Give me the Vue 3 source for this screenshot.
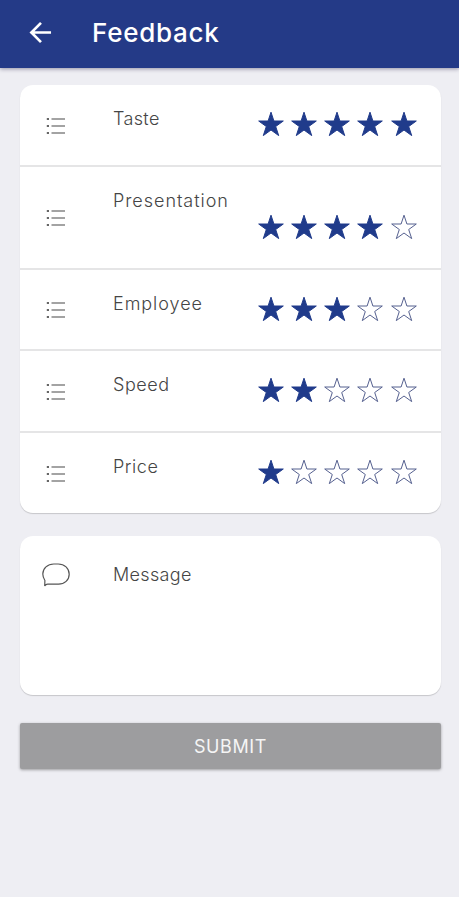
<template>
  <div class="feedback-page">
    <header class="toolbar">
      <button class="back-button" aria-label="Back">
        <svg class="back-icon" viewBox="0 0 24 24">
          <path d="M23 12H3M12.5 2L2.5 12L12.5 22" />
        </svg>
      </button>
      <h1 class="toolbar-title">Feedback</h1>
    </header>

    <main class="content">
      <!-- Rating rows -->
      <section class="card">
        <div
          v-for="item in items"
          :key="item.name"
          class="rating-row"
          :class="{ wrapped: item.wrapped }"
        >
          <svg class="list-icon" viewBox="0 0 20 18">
            <path class="list-lines" d="M5.5 2H19M5.5 9H19M5.5 16H19" />
            <path class="list-dots" d="M.8 2H3M.8 9H3M.8 16H3" />
          </svg>
          <div class="rating-body">
            <span class="label" :class="item.name.toLowerCase()">{{ item.name }}</span>
            <div class="stars">
              <svg
                v-for="n in 5"
                :key="n"
                class="star"
                :class="{ filled: n <= item.rating }"
                viewBox="0 0 28 26"
                @click="item.rating = n"
              >
                <path d="M14 1.2L16.9 10H26.3L18.7 15.5L21.7 24.6L14 19L6.3 24.6L9.3 15.5L1.7 10H11.1Z" />
              </svg>
            </div>
          </div>
        </div>
      </section>

      <!-- Message -->
      <section class="card message-card">
        <svg class="chat-icon" viewBox="0 0 28 24">
          <path d="M2.7 23L2.9 17.5C1.5 15.3.8 13.3.8 11C.8 5.3 5.6 1 11.8 1H16.2C22.5 1 27.2 5.4 27.2 11.2C27.2 17 22.5 21.2 16.5 21.2H5.6C4.4 21.2 3.4 21.8 2.7 23Z" />
        </svg>
        <span class="label message">Message</span>
      </section>

      <button class="submit-button">SUBMIT</button>
    </main>
  </div>
</template>

<script setup>
import { reactive } from 'vue'

const items = reactive([
  { name: 'Taste', rating: 5 },
  { name: 'Presentation', rating: 4, wrapped: true },
  { name: 'Employee', rating: 3 },
  { name: 'Speed', rating: 2 },
  { name: 'Price', rating: 1 }
])
</script>

<style>
body {
  margin: 0;
  background: #fff;
}
</style>

<style scoped>
.feedback-page {
  height: 896.5px;
  background: #eeeef3;
  font-family: Inter, "Liberation Sans", sans-serif;
}

/* Toolbar */
.toolbar {
  display: flex;
  align-items: center;
  box-sizing: border-box;
  height: 68px;
  padding: 0 0 3px 28px;
  background: #243a87;
  box-shadow: 0 1px 4px rgba(40, 35, 70, 0.45);
}
.back-button {
  display: flex;
  padding: 0;
  border: none;
  background: none;
  cursor: pointer;
}
.back-icon {
  width: 25px;
  height: 23px;
  fill: none;
  stroke: #fff;
  stroke-width: 2.8;
}
.toolbar-title {
  margin: 0 0 0 39px;
  color: #fff;
  font-size: 26px;
  font-weight: 500;
  line-height: 32px;
  letter-spacing: 0.75px;
}

.content {
  padding: 17px 18px 0 20px;
}

/* Cards */
.card {
  background: #fff;
  border-radius: 13px;
  box-shadow: 0 1px 1px rgba(0, 0, 0, 0.17);
}
.rating-row {
  display: flex;
  align-items: center;
  box-sizing: border-box;
  height: 81.6px;
  padding-left: 26px;
  border-bottom: 2px solid #e5e5e6;
}
.rating-row.wrapped {
  height: 103px;
}
.rating-row:last-child {
  height: 80px;
  border-bottom: none;
}
.list-icon {
  width: 20px;
  height: 18px;
  flex: none;
  margin-top: 2px;
  fill: none;
  stroke: #858585;
}
.list-lines {
  stroke-width: 1.4;
}
.list-dots {
  stroke: #666;
  stroke-width: 2;
}
.rating-body {
  display: flex;
  flex: 1;
  align-self: flex-start;
  justify-content: space-between;
  align-items: flex-start;
  padding: 22px 23.4px 0 47px;
}
.wrapped .rating-body {
  flex-direction: column;
}
.label {
  color: #454545;
  font-size: 18px;
  font-weight: 300;
  line-height: 24px;
  letter-spacing: 0.55px;
}
.label.taste,
.label.message {
  letter-spacing: 0.35px;
}
.label.presentation,
.label.employee {
  letter-spacing: 0.95px;
}
.stars {
  display: flex;
  gap: 5.2px;
  padding-top: 4px;
}
.wrapped .stars {
  align-self: flex-end;
  padding-top: 1.5px;
}
.star {
  width: 28px;
  height: 26px;
  fill: none;
  stroke: #55608f;
  stroke-width: 1;
  cursor: pointer;
}
.star.filled {
  fill: #203b8b;
  stroke: #203b8b;
}

/* Message box */
.message-card {
  display: flex;
  align-items: flex-start;
  box-sizing: border-box;
  height: 159.4px;
  margin-top: 23px;
  padding: 27px 22px;
}
.chat-icon {
  width: 28px;
  height: 24px;
  margin-right: 43px;
  fill: none;
  stroke: #555;
  stroke-width: 1.2;
}

.submit-button {
  display: block;
  width: 100%;
  height: 46px;
  margin-top: 28px;
  padding: 0;
  border: none;
  border-radius: 2px;
  background: #9d9d9f;
  box-shadow: 0 1px 3px rgba(0, 0, 0, 0.35);
  color: #f5f5f5;
  font-family: inherit;
  font-size: 18px;
  font-weight: 400;
  letter-spacing: 0.6px;
  cursor: pointer;
}
</style>
